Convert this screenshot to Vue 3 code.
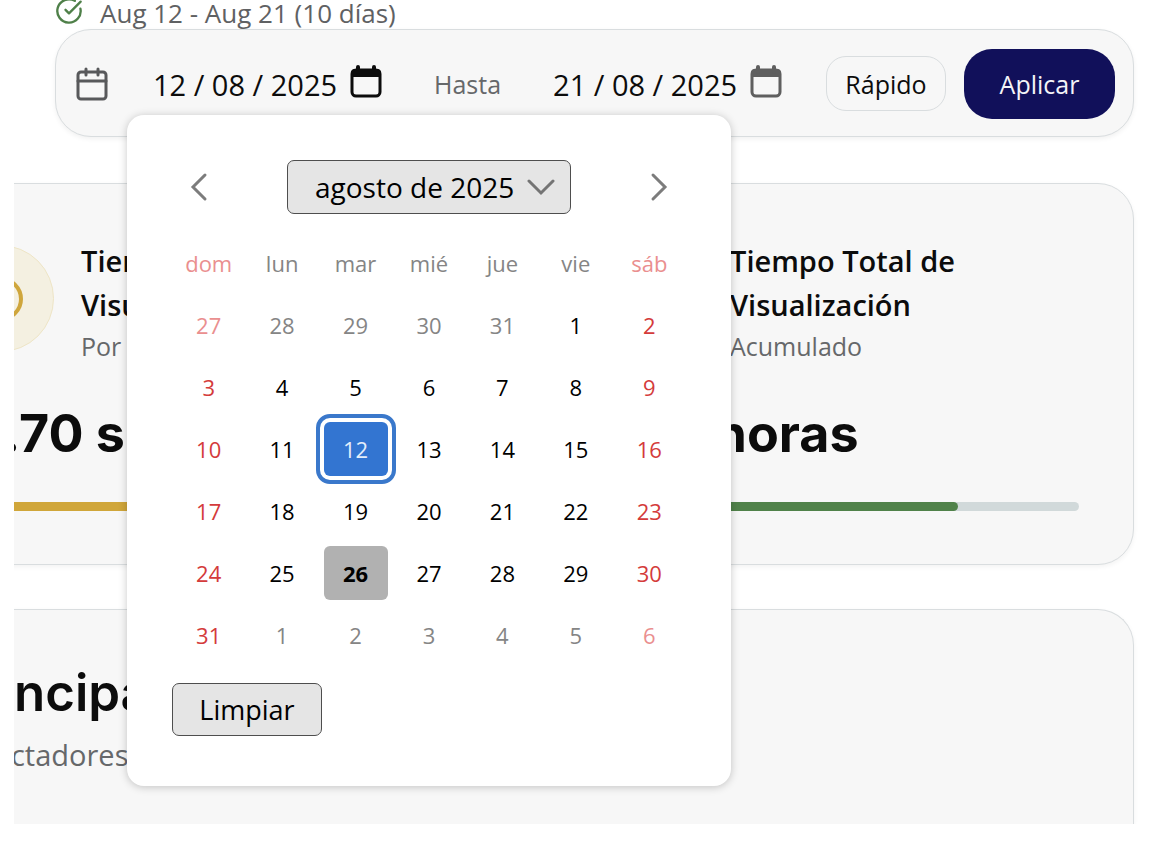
<script setup>
import { ref } from 'vue'

const from = ref('12 / 08 / 2025')
const to = ref('21 / 08 / 2025')
const selected = ref(12)
const weekdays = ['dom', 'lun', 'mar', 'mié', 'jue', 'vie', 'sáb']

const start = new Date(2025, 6, 27)
const weeks = Array.from({ length: 6 }, (_, w) =>
  Array.from({ length: 7 }, (_, d) => {
    const date = new Date(start.getFullYear(), start.getMonth(), start.getDate() + w * 7 + d)
    return {
      day: date.getDate(),
      outside: date.getMonth() !== 7,
      weekend: d === 0 || d === 6,
      today: date.getMonth() === 7 && date.getDate() === 26
    }
  })
)

function pick(cell) {
  if (cell.outside) return
  selected.value = cell.day
  from.value = String(cell.day).padStart(2, '0') + ' / 08 / 2025'
}
</script>

<template>
  <main class="page">
    <p class="range">
      <svg class="range-icon" viewBox="0 0 24 24" fill="none" stroke="currentColor" stroke-width="2" stroke-linecap="round" stroke-linejoin="round" aria-hidden="true">
        <path d="M21.8 10A10 10 0 1 1 17 3.3" />
        <path d="m9 11 3 3L22 4" />
      </svg>
      <span>Aug 12 - Aug 21 (10 días)</span>
    </p>

    <section class="filter">
      <svg class="filter-icon" viewBox="0 0 32 34" fill="none" stroke="currentColor" stroke-width="3" stroke-linecap="round" stroke-linejoin="round" aria-hidden="true">
        <rect x="2" y="5" width="28" height="27" rx="3" />
        <path d="M2 14h28M10 2v6M22 2v6" />
      </svg>
      <div class="field">
        <input v-model="from" class="date" type="text" aria-label="Desde" />
        <button class="picker active" type="button" aria-label="Abrir calendario">
          <svg viewBox="0 0 32 34" fill="none" stroke="currentColor" aria-hidden="true">
            <rect x="2" y="5" width="28" height="26" rx="4" stroke-width="3" />
            <path d="M1 12V8a4 4 0 0 1 4-4h22a4 4 0 0 1 4 4v4z" fill="currentColor" stroke="none" />
            <path d="M8 2v5M24 2v5" stroke-width="4" stroke-linecap="round" />
          </svg>
        </button>
      </div>
      <label class="until" for="date-to">Hasta</label>
      <div class="field">
        <input id="date-to" v-model="to" class="date" type="text" />
        <button class="picker" type="button" aria-label="Abrir calendario">
          <svg viewBox="0 0 32 34" fill="none" stroke="currentColor" aria-hidden="true">
            <rect x="2" y="5" width="28" height="26" rx="4" stroke-width="3" />
            <path d="M1 12V8a4 4 0 0 1 4-4h22a4 4 0 0 1 4 4v4z" fill="currentColor" stroke="none" />
            <path d="M8 2v5M24 2v5" stroke-width="4" stroke-linecap="round" />
          </svg>
        </button>
      </div>
      <div class="actions">
        <button class="quick" type="button">Rápido</button>
        <button class="apply" type="button">Aplicar</button>
      </div>

      <div class="popup">
        <div class="popup-head">
          <button class="arrow" type="button" aria-label="Mes anterior">
            <svg viewBox="0 0 18 30" fill="none" stroke="currentColor" stroke-width="3" stroke-linecap="round" aria-hidden="true"><path d="M15 3 3 15l12 12" /></svg>
          </button>
          <div class="month">
            <select aria-label="Mes">
              <option>agosto de 2025</option>
            </select>
            <svg viewBox="0 0 28 18" fill="none" stroke="currentColor" stroke-width="3" stroke-linecap="round" aria-hidden="true"><path d="m2 3 12 12L26 3" /></svg>
          </div>
          <button class="arrow" type="button" aria-label="Mes siguiente">
            <svg viewBox="0 0 18 30" fill="none" stroke="currentColor" stroke-width="3" stroke-linecap="round" aria-hidden="true"><path d="m3 3 12 12L3 27" /></svg>
          </button>
        </div>
        <table class="calendar">
          <thead>
            <tr>
              <th v-for="(name, i) in weekdays" :key="name" scope="col" :class="{ weekend: i === 0 || i === 6 }">{{ name }}</th>
            </tr>
          </thead>
          <tbody>
            <tr v-for="(week, w) in weeks" :key="w">
              <td v-for="(cell, d) in week" :key="d">
                <button
                  type="button"
                  class="day"
                  :class="{ weekend: cell.weekend, outside: cell.outside, today: cell.today, selected: !cell.outside && cell.day === selected }"
                  @click="pick(cell)"
                >{{ cell.day }}</button>
              </td>
            </tr>
          </tbody>
        </table>
        <button class="clear" type="button" @click="from = ''">Limpiar</button>
      </div>
    </section>

    <section class="cards">
      <article class="card">
        <header class="card-head">
          <div class="badge">
            <svg viewBox="0 0 48 48" fill="none" stroke="currentColor" stroke-width="4" stroke-linecap="round" aria-hidden="true">
              <circle cx="24" cy="24" r="20" />
              <path d="M24 12v12l8 4" />
            </svg>
          </div>
          <div>
            <h2>Tiempo<br />Visualización</h2>
            <p class="note">Por</p>
          </div>
        </header>
        <p class="value">10.70 s</p>
        <div class="track"><div class="fill gold"></div></div>
      </article>
      <article class="card">
        <header class="card-head">
          <div class="badge green"></div>
          <div>
            <h2>Tiempo Total de<br />Visualización</h2>
            <p class="note">Acumulado</p>
          </div>
        </header>
        <p class="value">10.5 horas</p>
        <div class="track"><div class="fill"></div></div>
      </article>
    </section>

    <section class="viewers">
      <h2>Principal</h2>
      <p>Espectadores</p>
    </section>
  </main>
</template>

<style>
body {
  background: #fff;
}
</style>

<style scoped>
* {
  box-sizing: border-box;
}

.page {
  display: flex;
  flex-direction: column;
  min-height: calc(100vh - 24px);
  margin: 0 0 24px 14px;
  padding-right: 16px;
  overflow: hidden;
  color: #0c0c0c;
  font-family: "Open Sans", "Noto Sans", sans-serif;
}

h2,
p {
  margin: 0;
}

button,
input,
select {
  margin: 0;
  padding: 0;
  border: 0;
  background: none;
  color: inherit;
  font: inherit;
}

button {
  cursor: pointer;
}

svg {
  display: block;
}

.range {
  display: flex;
  gap: 17px;
  margin-bottom: 3px;
  margin-left: 41px;
  color: #5f6163;
  font-size: 26px;
  line-height: 26px;
}

.range-icon {
  width: 28px;
  height: 28px;
  margin: -3px 0 -2px;
  color: #4f8049;
}

.filter {
  position: relative;
  z-index: 1;
  display: flex;
  align-items: center;
  height: 108px;
  margin-left: 41px;
  padding: 1px 18px 0 20px;
  border: 1px solid #d9dddf;
  border-radius: 36px;
  background: #f7f7f7;
  box-shadow: 0 2px 5px rgba(0, 0, 0, 0.06);
}

.filter-icon {
  width: 32px;
  height: 34px;
  margin-right: 45px;
  color: #58595b;
}

.field {
  display: flex;
  align-items: center;
  gap: 8px;
}

.date {
  width: 189px;
  height: 40px;
  padding-top: 2px;
  font-size: 29px;
}

.picker {
  width: 32px;
  margin-bottom: 4px;
  color: #5f5f5f;
}

.picker.active {
  color: #0c0c0c;
}

.until {
  margin: 0 52px;
  color: #66686a;
  font-size: 25px;
}

.actions {
  display: flex;
  align-items: center;
  gap: 18px;
  margin-left: auto;
}

.quick {
  width: 120px;
  height: 55px;
  border: 1px solid #d9dddf;
  border-radius: 20px;
  font-size: 25px;
}

.apply {
  width: 151px;
  height: 70px;
  border-radius: 28px;
  background: #11105a;
  color: #f4f4f8;
  font-size: 25px;
}

.popup {
  position: absolute;
  top: 85px;
  left: 71px;
  width: 604px;
  padding: 45px 45px 50px;
  border-radius: 17px;
  background: #fff;
  box-shadow: 0 1px 8px rgba(0, 0, 0, 0.22);
  color: #000;
}

.popup-head {
  display: flex;
  align-items: center;
  justify-content: space-between;
  margin-bottom: 18px;
  padding: 0 18px;
}

.arrow {
  width: 18px;
  color: #7c7c7c;
}

.month {
  position: relative;
}

.month select {
  display: block;
  width: 284px;
  height: 54px;
  padding-left: 27px;
  border: 1px solid #4e4e4e;
  border-radius: 7px;
  background: #e5e5e5;
  font-size: 28px;
  appearance: none;
}

.month svg {
  position: absolute;
  top: 18px;
  right: 16px;
  width: 28px;
  color: #747474;
  pointer-events: none;
}

.calendar {
  width: 100%;
  border-collapse: collapse;
  table-layout: fixed;
  font-size: 22px;
  text-align: center;
}

.calendar th,
.calendar td {
  height: 62px;
  padding: 0;
}

.calendar th {
  color: #858585;
  font-weight: 400;
}

.calendar th.weekend {
  color: #ea8f8f;
}

.day {
  width: 64px;
  height: 54px;
  border-radius: 6px;
}

.day.weekend {
  color: #d43b3b;
}

.day.outside {
  color: #858585;
}

.day.outside.weekend {
  color: #ea8f8f;
}

.day.today {
  background: #b1b1b1;
  font-weight: 700;
}

.day.selected {
  outline: 4px solid #3a78cb;
  outline-offset: 4px;
  background: #3375d1;
  color: #e4eefb;
}

.clear {
  display: block;
  width: 150px;
  height: 53px;
  margin-top: 17px;
  border: 1px solid #4e4e4e;
  border-radius: 7px;
  background: #e5e5e5;
  font-size: 27px;
}

.cards {
  display: grid;
  grid-template-columns: 1fr 1fr;
  gap: 56px;
  margin: 46px 0 44px -122px;
}

.card,
.viewers {
  border: 1px solid #d9dddf;
  border-radius: 36px;
  background: #f7f7f7;
  box-shadow: 0 2px 5px rgba(0, 0, 0, 0.05);
}

.card {
  padding: 55px 54px 53px;
}

.card-head {
  display: flex;
  align-items: flex-start;
  gap: 27px;
}

.badge {
  display: grid;
  place-items: center;
  width: 107px;
  height: 107px;
  margin-top: 6px;
  border: 1px solid #eee5c6;
  border-radius: 50%;
  background: #f4f0e1;
  color: #cfa63c;
}

.badge svg {
  width: 48px;
}

.badge.green {
  border-color: #d3e0d1;
  background: #e6ede5;
}

.card h2 {
  font-size: 29px;
  font-weight: 600;
  line-height: 44px;
}

.note {
  color: #66686a;
  font-size: 25px;
  line-height: 38px;
}

.value {
  margin: 38px 0;
  font-family: Inter, sans-serif;
  font-size: 52px;
  font-weight: 700;
  line-height: 61px;
}

.track {
  height: 9px;
  border-radius: 5px;
  background: #d1d9da;
  overflow: hidden;
}

.fill {
  width: 75%;
  height: 100%;
  border-radius: 5px;
  background: #50824a;
}

.fill.gold {
  width: 100%;
  background: #d0a63a;
}

.viewers {
  flex: 1;
  margin-left: -122px;
  padding: 51px 54px 40px;
  border-bottom: 0;
  border-radius: 36px 36px 0 0;
}

.viewers h2 {
  font-family: Inter, sans-serif;
  font-size: 51px;
  font-weight: 600;
  line-height: 64px;
}

.viewers p {
  margin-top: 8px;
  color: #66686a;
  font-size: 29px;
  line-height: 44px;
}
</style>
